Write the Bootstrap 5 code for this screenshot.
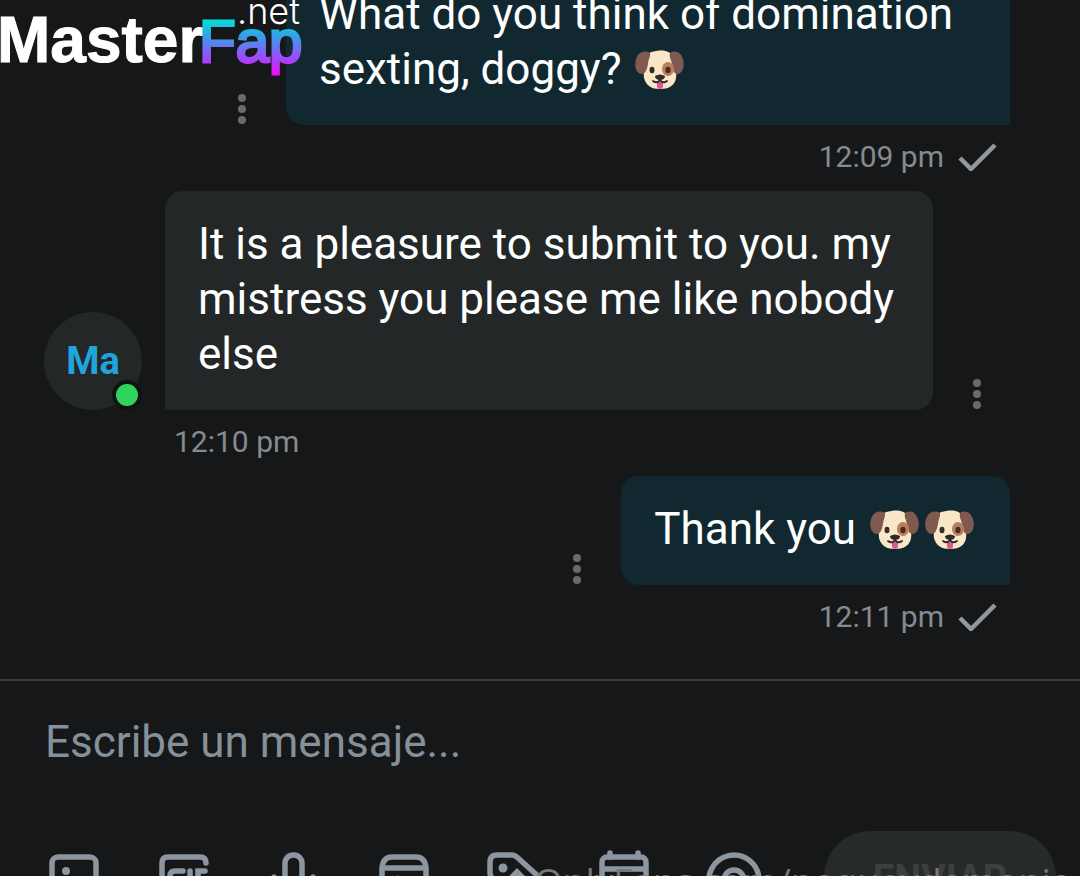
<!DOCTYPE html>
<html lang="es">
<head>
<meta charset="utf-8">
<meta name="viewport" content="width=device-width, initial-scale=1">
<title>Chat</title>
<link href="https://cdn.jsdelivr.net/npm/bootstrap@5.3.0/dist/css/bootstrap.min.css" rel="stylesheet">
<style>
body { background: #161718; color: #fdfefe; font-family: Roboto, "Liberation Sans", sans-serif; }
.thread { min-height: 0; padding: 0 70px 28px 44px; }
.bubble { font-size: 44px; line-height: 55px; padding: 26px 33px 28px; border-radius: 18px; }
.bubble-out { background: #112830; border-bottom-right-radius: 0; }
.bubble-in { background: #232728; border-bottom-left-radius: 0; width: 768px; }
.bubble-long { width: 724px; }
.stamp { height: 66px; padding-bottom: 4px; font-size: 30px; color: #858b8e; }
.stamp-out { padding-right: 12px; gap: 14px; }
.stamp-in { padding-left: 130px; }
.more { width: 24px; height: 32px; color: #686a6c; }
.more-out { margin-right: 32px; }
.more-in { margin-left: 32px; }
.avatar { width: 98px; height: 98px; margin-right: 23px; background: #232728; color: #1fa5dc; font-size: 38px; }
.online { width: 30px; height: 30px; right: 0; bottom: 0; background: #32d35c; border: 4px solid #101411; }
.dog { width: 49px; height: 40px; margin: -4px 3px 0; }
.composer { height: 197px; border-top: 2px solid #383838; padding: 31px 24px 0 45px; }
.entry, .entry:focus { height: 119px; font-size: 44px; line-height: 60px; color: #fff; resize: none; outline: 0; }
.entry::placeholder { color: #84909a; opacity: 1; }
.tools { gap: 60px; padding-top: 19px; }
.tool { width: 50px; height: 56px; color: #8b96a1; }
.send { width: 232px; height: 92px; background: #262a2b; color: #3c4041; font-size: 38px; }
.brand { top: 0; left: 0; width: 304px; height: 84px; font-family: "Liberation Sans", sans-serif; }
.watermark { left: 534px; top: 860px; font: 37px/42px "Open Sans", sans-serif; color: #777674; }
</style>
</head>
<body>
<svg class="d-none" xmlns="http://www.w3.org/2000/svg">
  <symbol id="dog" viewBox="0 0 49 40">
    <path d="M16 2C27-1 36 0 38 8c2 8 4 14 3 20-1 8-8 11-16 11S11 36 9 28C8 20 10 5 16 2Z" fill="#fae7c8"/>
    <path d="M14 2C7 0 3 3 1 9c-2 7 0 14 5 15 5 0 6-5 7-10 0-5 4-9 1-12ZM36 2c7-2 10 2 12 7 2 7 0 14-5 15-5 0-5-5-6-10-1-5-4-8-1-12Z" fill="#805950"/>
    <ellipse cx="33" cy="19" rx="6" ry="7" fill="#b5805d"/>
    <ellipse cx="17" cy="20" rx="2.5" ry="3.2" fill="#392a24"/><ellipse cx="33" cy="20" rx="2.6" ry="3.3" fill="#54271b"/>
    <path d="M22 31h6v6q-3 4-6 0Z" fill="#dc5794"/>
    <path d="M20 26q5-3 10 0c0 3-3 4-5 4s-5-1-5-4Z" fill="#2f2928"/>
    <path d="M18 31q4 3 7-1 3 4 7 1" fill="none" stroke="#2f2928" stroke-width="1.8" stroke-linecap="round"/>
  </symbol>
  <symbol id="dots" viewBox="0 0 24 32"><g fill="currentColor"><circle cx="12" cy="5" r="4"/><circle cx="12" cy="16" r="4"/><circle cx="12" cy="27" r="4"/></g></symbol>
  <symbol id="check" viewBox="0 0 40 30"><path d="m2 17 11 11L37 4" fill="none" stroke="#94989b" stroke-width="4.5"/></symbol>
</svg>

<div class="vh-100 d-flex flex-column overflow-hidden position-relative">
  <main class="thread flex-grow-1 d-flex flex-column justify-content-end overflow-hidden">
    <div class="d-flex justify-content-end align-items-end flex-shrink-0">
      <button class="btn p-0 border-0 more more-out d-flex" aria-label="Más"><svg width="24" height="32"><use href="#dots"/></svg></button>
      <div class="bubble bubble-out bubble-long">What do you think of domination sexting, doggy? <svg class="dog" role="img" aria-label="🐶"><use href="#dog"/></svg></div>
    </div>
    <div class="stamp stamp-out d-flex justify-content-end align-items-center flex-shrink-0"><time>12:09 pm</time><svg width="40" height="30"><use href="#check"/></svg></div>

    <div class="d-flex align-items-end flex-shrink-0">
      <div class="avatar rounded-circle position-relative d-flex align-items-center justify-content-center fw-bold flex-shrink-0">Ma<span class="online rounded-circle position-absolute"></span></div>
      <div class="bubble bubble-in">It is a pleasure to submit to you. my mistress you please me like nobody else</div>
      <button class="btn p-0 border-0 more more-in d-flex" aria-label="Más"><svg width="24" height="32"><use href="#dots"/></svg></button>
    </div>
    <div class="stamp stamp-in d-flex align-items-center flex-shrink-0"><time>12:10 pm</time></div>

    <div class="d-flex justify-content-end align-items-end flex-shrink-0">
      <button class="btn p-0 border-0 more more-out d-flex" aria-label="Más"><svg width="24" height="32"><use href="#dots"/></svg></button>
      <div class="bubble bubble-out">Thank you <svg class="dog" role="img" aria-label="🐶"><use href="#dog"/></svg><svg class="dog" role="img" aria-label="🐶"><use href="#dog"/></svg></div>
    </div>
    <div class="stamp stamp-out d-flex justify-content-end align-items-center flex-shrink-0"><time>12:11 pm</time><svg width="40" height="30"><use href="#check"/></svg></div>
  </main>

  <form class="composer flex-shrink-0 overflow-hidden">
    <textarea class="entry d-block w-100 p-0 border-0 bg-transparent" placeholder="Escribe un mensaje..." aria-label="Mensaje"></textarea>
    <div class="d-flex align-items-start justify-content-between">
      <div class="tools d-flex">
        <button type="button" class="btn p-0 border-0 tool" aria-label="Imagen"><svg class="d-block" width="58" height="56" viewBox="0 0 58 56" fill="none" stroke="currentColor" stroke-width="5.5"><rect x="7" y="7" width="44" height="44" rx="6"/><circle cx="21" cy="21" r="4" fill="currentColor" stroke="none"/><path d="m8 46 14-14 10 10 8-8 11 11"/></svg></button>
        <button type="button" class="btn p-0 border-0 tool" aria-label="GIF"><svg class="d-block" width="58" height="56" viewBox="0 0 58 56" fill="none" stroke="currentColor" stroke-width="5.5" stroke-linecap="round"><path d="M51 13q0-6-6-6H13q-6 0-6 6v32q0 6 6 6h32q6 0 6-6"/><path d="M28 21h-8q-5 0-5 5v8q0 5 5 5h7v-8M35 21v18M50 21h-7v18M43 30h7"/></svg></button>
        <button type="button" class="btn p-0 border-0 tool" aria-label="Audio"><svg class="d-block" width="58" height="56" viewBox="0 0 58 56" fill="none" stroke="currentColor" stroke-width="5.5" stroke-linecap="round"><rect x="20" y="5" width="17" height="32" rx="8"/><path d="M9 27c0 25 39 25 39 0M28 46v8"/></svg></button>
        <button type="button" class="btn p-0 border-0 tool" aria-label="Archivo"><svg class="d-block" width="58" height="56" viewBox="0 0 58 56" fill="none" stroke="currentColor" stroke-width="5.5"><path d="M7 18q1-11 10-11h24q9 0 10 11v27q0 6-6 6H13q-6 0-6-6ZM7 18h44"/><path d="m22 25 12 9-12 9Z" fill="currentColor" stroke="none"/></svg></button>
        <button type="button" class="btn p-0 border-0 tool" aria-label="Precio"><svg class="d-block" width="58" height="56" viewBox="0 0 58 56" fill="none" stroke="currentColor" stroke-width="5.5"><path d="M5 12q0-7 7-7h15q3 0 6 3l21 19q4 4 0 8L38 51q-4 4-8 0L8 29q-3-3-3-6Z"/><circle cx="18" cy="18" r="4.5" fill="currentColor" stroke="none"/><path d="m22 32 10-10 10 10"/></svg></button>
        <button type="button" class="btn p-0 border-0 tool" aria-label="Programar"><svg class="d-block" width="58" height="56" viewBox="0 0 58 56" fill="none" stroke="currentColor" stroke-width="5.5" stroke-linecap="round"><rect x="7" y="7" width="44" height="44" rx="5"/><path d="M15 3v4M43 3v4M8 19h42"/><path d="M17 30h24M17 40h16"/></svg></button>
        <button type="button" class="btn p-0 border-0 tool" aria-label="Mencionar"><svg class="d-block" width="58" height="56" viewBox="0 0 58 56" fill="none" stroke="currentColor" stroke-width="5.5" stroke-linecap="round"><circle cx="29" cy="30" r="10"/><path d="M39 30c0 12 15 9 15 0a25 25 0 1 0-10 20"/></svg></button>
      </div>
      <button type="button" class="send btn rounded-pill border-0 fw-bold p-0 pt-1">ENVIAR</button>
    </div>
  </form>

  <svg class="brand position-absolute" viewBox="0 0 304 84" aria-label="MasterFap.net">
    <defs><linearGradient id="neon" x1="0" y1="17" x2="0" y2="77" gradientUnits="userSpaceOnUse"><stop stop-color="#00e8d2"/><stop offset=".3" stop-color="#30a4e6"/><stop offset=".65" stop-color="#9253fa"/><stop offset="1" stop-color="#ff00ff"/></linearGradient></defs>
    <text x="-3" y="62" font-size="64" font-weight="700" fill="#fff" stroke="#fff">Master</text>
    <text x="199" y="62" font-size="60" fill="url(#neon)" stroke="url(#neon)" stroke-width="3">Fap</text>
    <text x="237" y="24" font-size="36" font-weight="300" fill="#fff" font-family="Inter, sans-serif">.net</text>
  </svg>
  <div class="watermark position-absolute text-nowrap">OnlyFans.com/pequeydemonia</div>
</div>
<script src="https://cdn.jsdelivr.net/npm/bootstrap@5.3.0/dist/js/bootstrap.bundle.min.js"></script>
</body>
</html>
